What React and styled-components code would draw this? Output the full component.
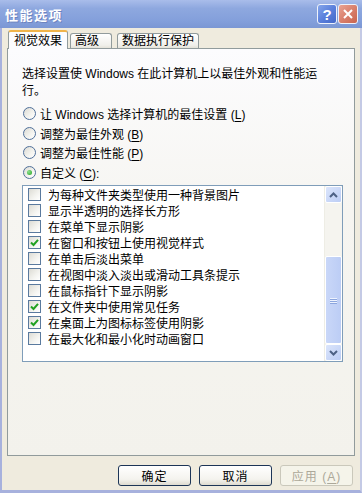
import styled, { createGlobalStyle } from 'styled-components';

const GlobalStyle = createGlobalStyle`
  html, body { margin: 0; padding: 0; }
  body {
    width: 362px;
    height: 493px;
    overflow: hidden;
    background: #efebde;
    font-family: "Liberation Sans", "Noto Sans CJK SC", sans-serif;
    font-size: 12px;
    color: #000;
  }
`

const Window = styled.div`
  width: 362px;
  height: 493px;
  display: flex;
  flex-direction: column;
  background: #efebde;
`
const TitleBar = styled.div`
  height: 28px;
  flex: none;
  display: flex;
  align-items: center;
  padding: 0 4px 0 5px;
  box-sizing: border-box;
  background: linear-gradient(#a9bdea 0%, #8ea8df 30%, #839fdb 75%, #7b97d4 100%);
`
const Title = styled.div`
  flex: 1;
  color: #fff;
  font-weight: bold;
  font-size: 13px;
  letter-spacing: 1.5px;
  text-shadow: 1px 1px 0 #6d84bf;
`
const CaptionButton = styled.div`
  width: 20px;
  height: 20px;
  margin-left: 1px;
  box-sizing: border-box;
  border: 1px solid #eef2fb;
  border-radius: 3px;
  display: flex;
  align-items: center;
  justify-content: center;
  color: #fff;
  font: bold 15px "Liberation Sans", sans-serif;
  background: ${p => p.$close
    ? 'linear-gradient(135deg, #eaa494 0%, #d9806d 50%, #c9654f 100%)'
    : 'linear-gradient(135deg, #85a6ea 0%, #5b80dc 50%, #4367c8 100%)'};
`
const Body = styled.div`
  flex: 1;
  display: flex;
  flex-direction: column;
  border-left: 2px solid #a7b1dd;
  border-right: 2px solid #c4cae5;
  border-bottom: 3px solid #a7b1dd;
  padding: 2px 5px 0;
`
const TabStrip = styled.div`
  height: 18px;
  display: flex;
  align-items: flex-end;
  padding-left: 1px;
`
const Tab = styled.div`
  box-sizing: border-box;
  border: 1px solid #919b9c;
  border-bottom: none;
  border-radius: 3px 3px 0 0;
  line-height: 13px;
  white-space: nowrap;
  height: ${p => (p.$active ? '19px' : '15px')};
  padding: ${p => (p.$active ? '3px 5px 0' : '1px 4px 0')};
  min-width: ${p => (p.$active ? 'auto' : '42px')};
  margin-left: ${p => p.$gap || 0}px;
  margin-bottom: ${p => (p.$active ? '-1px' : '0')};
  position: relative;
  z-index: ${p => (p.$active ? 2 : 1)};
  border-top: ${p => (p.$active ? '2px solid #f0b44a' : '1px solid #919b9c')};
  background: ${p => (p.$active ? '#fcfcfe' : 'linear-gradient(#ffffff, #f0efea 80%, #e4e2d8)')};
`
const Panel = styled.div`
  height: 408px;
  box-sizing: border-box;
  border: 1px solid #919b9c;
  background: linear-gradient(#fcfcfe 0%, #f6f5f1 40%, #f3f2ec 100%);
  padding: 17px 0 0 14px;
  display: flex;
  flex-direction: column;
`
const Description = styled.p`
  margin: 0;
  line-height: 17px;
  width: 310px;
`
const Options = styled.div`
  margin-top: 4px;
  display: flex;
  flex-direction: column;
`
const RadioRow = styled.label`
  height: 19.5px;
  display: flex;
  align-items: center;
  gap: 4px;
  padding-left: 1px;
  white-space: nowrap;
`
const RadioDot = styled.span`
  width: 13px;
  height: 13px;
  box-sizing: border-box;
  border-radius: 50%;
  border: 1px solid #50709a;
  background: linear-gradient(135deg, #dcdbd4 0%, #f4f4f0 60%, #ffffff 100%);
  display: flex;
  align-items: center;
  justify-content: center;
  &::after {
    content: '';
    width: 5px;
    height: 5px;
    border-radius: 50%;
    background: ${p => (p.$checked ? 'radial-gradient(circle at 35% 35%, #8de28d, #21a121)' : 'transparent')};
  }
`
const Key = styled.u`
  text-underline-offset: 2px;
`
const ListBox = styled.div`
  margin-top: 3px;
  width: 321px;
  height: 177px;
  box-sizing: border-box;
  border: 1px solid #7f9db9;
  background: #fff;
  display: flex;
`
const List = styled.div`
  flex: 1;
  display: flex;
  flex-direction: column;
`
const CheckRow = styled.div`
  height: 16.1px;
  display: flex;
  align-items: center;
  gap: 7px;
  padding-left: 5px;
  white-space: nowrap;
`
const Box = styled.span`
  width: 13px;
  height: 13px;
  box-sizing: border-box;
  border: 1px solid #5a7a9e;
  background: linear-gradient(135deg, #dcdbd4 0%, #f4f4f0 60%, #ffffff 100%);
  display: flex;
  align-items: center;
  justify-content: center;
`
const ScrollBar = styled.div`
  width: 17px;
  display: flex;
  flex-direction: column;
  background: #f5f4ef;
  border-left: 1px solid #eeede5;
`
const ScrollButton = styled.div`
  height: 17px;
  box-sizing: border-box;
  border: 1px solid #fff;
  border-radius: 2px;
  background: linear-gradient(135deg, #dbe5fb, #bccdf5);
  display: flex;
  align-items: center;
  justify-content: center;
`
const Track = styled.div`
  flex: 1;
  display: flex;
  flex-direction: column;
  justify-content: flex-end;
`
const Thumb = styled.div`
  height: 88px;
  box-sizing: border-box;
  border: 1px solid #fff;
  border-radius: 2px;
  background: linear-gradient(90deg, #c9d7f8, #bccdf5);
  display: flex;
  flex-direction: column;
  align-items: center;
  justify-content: center;
  gap: 1px;
`
const Grip = styled.span`
  width: 7px;
  height: 1px;
  background: #eef3fe;
  box-shadow: 0 1px 0 #8ca6de;
`
const ButtonRow = styled.div`
  display: flex;
  justify-content: flex-end;
  gap: 8px;
  padding: 9px 2px 0 0;
`
const Button = styled.div`
  width: 73px;
  height: 21px;
  box-sizing: border-box;
  border: 1px solid ${p => (p.$disabled ? '#cac8bb' : '#1d3557')};
  border-radius: 3px;
  display: flex;
  align-items: center;
  justify-content: center;
  color: ${p => (p.$disabled ? '#aca899' : '#000')};
  background: ${p => (p.$disabled
    ? '#f5f4ea'
    : 'linear-gradient(#ffffff 0%, #f4f3ee 70%, #dedbd0 100%)')};
  letter-spacing: 1px;
`

const Arrow = ({ up }) => (
  <svg width="9" height="6" viewBox="0 0 9 6">
    <path d={up ? 'M1 5 L4.5 1.5 L8 5' : 'M1 1 L4.5 4.5 L8 1'} fill="none" stroke="#4d6185" strokeWidth="2" />
  </svg>
)

const Check = () => (
  <svg width="9" height="9" viewBox="0 0 9 9">
    <path d="M1 4.5 L3.5 7 L8 1.8" fill="none" stroke="#21a121" strokeWidth="2" />
  </svg>
)

const effects = [
  ['为每种文件夹类型使用一种背景图片', false],
  ['显示半透明的选择长方形', false],
  ['在菜单下显示阴影', false],
  ['在窗口和按钮上使用视觉样式', true],
  ['在单击后淡出菜单', false],
  ['在视图中淡入淡出或滑动工具条提示', false],
  ['在鼠标指针下显示阴影', false],
  ['在文件夹中使用常见任务', true],
  ['在桌面上为图标标签使用阴影', true],
  ['在最大化和最小化时动画窗口', false],
]

const App = () => {
  return (
    <Window>
      <GlobalStyle />
      <TitleBar>
        <Title>性能选项</Title>
        <CaptionButton>?</CaptionButton>
        <CaptionButton $close>
          <svg width="10" height="10" viewBox="0 0 10 10">
            <path d="M1 1 L9 9 M9 1 L1 9" stroke="#fff" strokeWidth="2" />
          </svg>
        </CaptionButton>
      </TitleBar>
      <Body>
        <TabStrip>
          <Tab $active>视觉效果</Tab>
          <Tab $gap={2}>高级</Tab>
          <Tab $gap={5}>数据执行保护</Tab>
        </TabStrip>
        <Panel>
          <Description>
            选择设置使 Windows 在此计算机上以最佳外观和性能运<br />行。
          </Description>
          <Options>
            <RadioRow><RadioDot /><span>让 Windows 选择计算机的最佳设置 (<Key>L</Key>)</span></RadioRow>
            <RadioRow><RadioDot /><span>调整为最佳外观 (<Key>B</Key>)</span></RadioRow>
            <RadioRow><RadioDot /><span>调整为最佳性能 (<Key>P</Key>)</span></RadioRow>
            <RadioRow><RadioDot $checked /><span>自定义 (<Key>C</Key>):</span></RadioRow>
          </Options>
          <ListBox>
            <List>
              {effects.map(([text, on]) => (
                <CheckRow key={text}>
                  <Box>{on && <Check />}</Box>
                  {text}
                </CheckRow>
              ))}
            </List>
            <ScrollBar>
              <ScrollButton><Arrow up /></ScrollButton>
              <Track>
                <Thumb><Grip /><Grip /><Grip /></Thumb>
              </Track>
              <ScrollButton><Arrow /></ScrollButton>
            </ScrollBar>
          </ListBox>
        </Panel>
        <ButtonRow>
          <Button>确定</Button>
          <Button>取消</Button>
          <Button $disabled><span>应用 (<Key>A</Key>)</span></Button>
        </ButtonRow>
      </Body>
    </Window>
  );
};

export default App;
